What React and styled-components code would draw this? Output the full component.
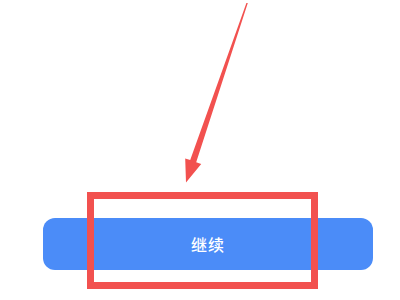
import React from 'react';
import styled, { createGlobalStyle } from 'styled-components';

const GlobalStyle = createGlobalStyle`
  html, body {
    margin: 0;
    padding: 0;
    background: #ffffff;
  }
`;

export default function App() {
  return (
    <>
      <GlobalStyle />
      <StyledPage>
        <StyledFooter>
          <StyledButton>继续</StyledButton>
        </StyledFooter>
        <StyledHighlight />
        <StyledArrow viewBox="0 0 400 300" width="400" height="300">
          <polygon
            points="247.8,3 196.2,162.3 201.2,164 186,182.5 185.2,158.4 190.2,160.1 246.4,3"
            fill="#f2514f"
          />
        </StyledArrow>
      </StyledPage>
    </>
  );
}

const StyledPage = styled.div`
  position: relative;
  width: 400px;
  height: 300px;
  overflow: hidden;
  display: flex;
  flex-direction: column;
  justify-content: flex-end;
  font-family: "Noto Sans CJK SC", "Noto Sans", sans-serif;
`;

const StyledFooter = styled.div`
  display: flex;
  padding: 0 27px 30px 43px;
`;

const StyledButton = styled.button`
  flex: 1;
  height: 52px;
  border: none;
  border-radius: 12px;
  background: #4b8cf8;
  color: #ffffff;
  font-family: inherit;
  font-size: 16px;
  font-weight: 500;
  letter-spacing: 1px;
  padding: 0 0 0 0;
  margin: 0;
`;

const StyledHighlight = styled.div`
  position: absolute;
  left: 87px;
  top: 192px;
  width: 231px;
  height: 97px;
  box-sizing: border-box;
  border: 7px solid #f2514f;
`;

const StyledArrow = styled.svg`
  position: absolute;
  left: 0;
  top: 0;
  pointer-events: none;
`;
